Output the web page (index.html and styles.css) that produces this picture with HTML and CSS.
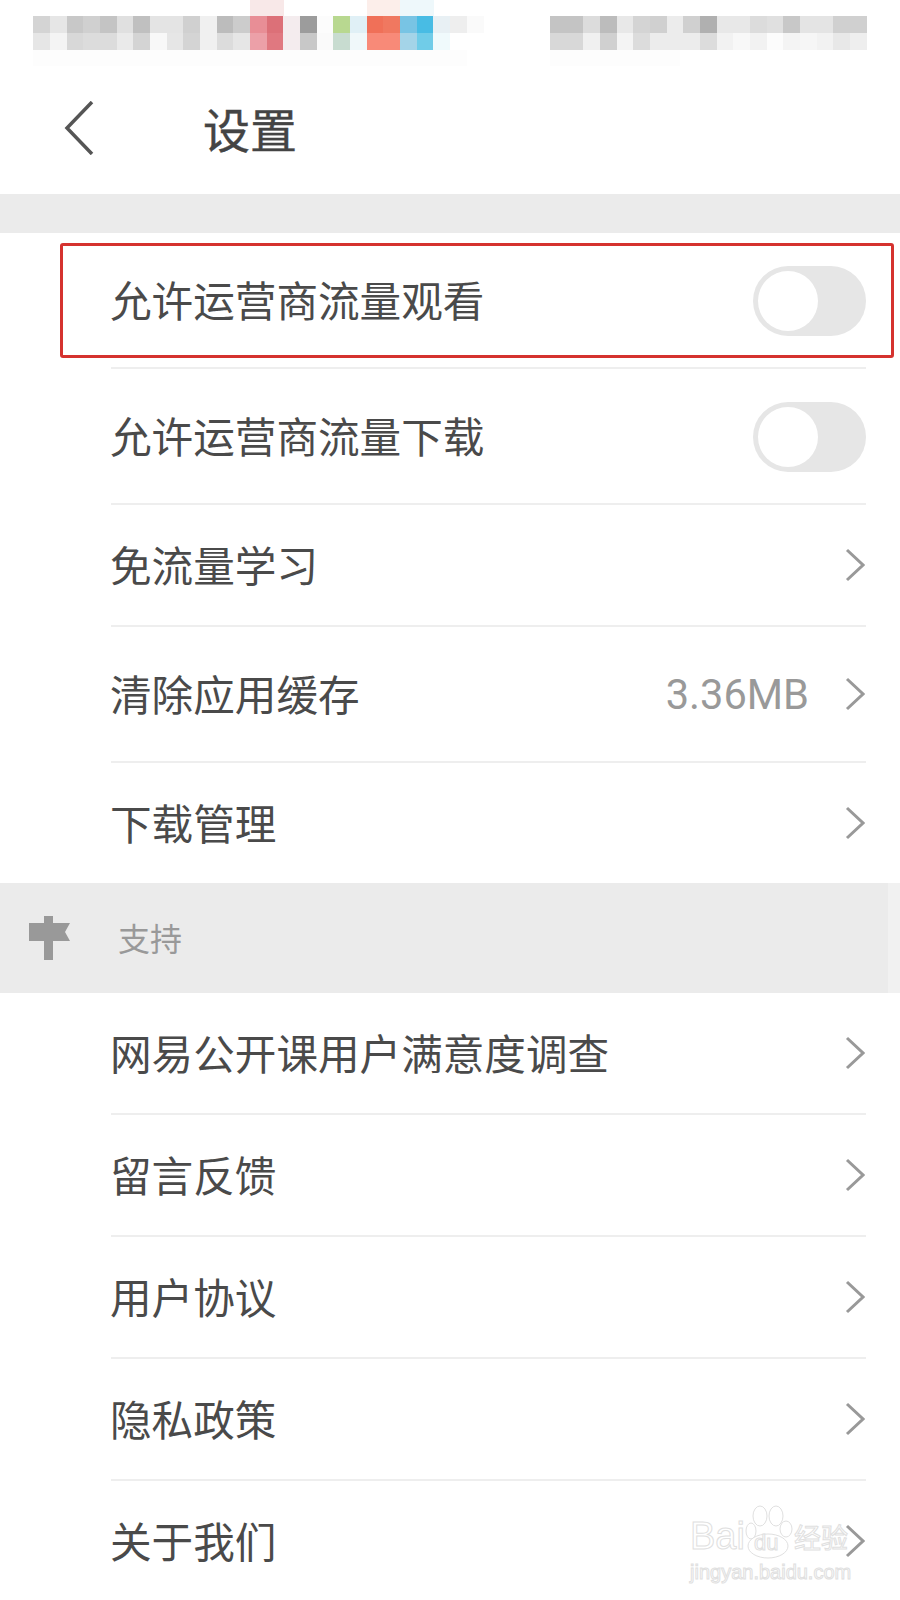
FILE: index.html
```html
<!DOCTYPE html>
<html lang="zh-CN">

<head>
  <meta charset="utf-8">
  <title>设置</title>
  <link rel="stylesheet" href="styles.css">
</head>

<body>
  <!-- status bar was pixelated in the original shot -->
  <svg class="status" width="900" height="66" viewBox="0 0 900 66">
    <g>
      <rect x="250" y="0" width="34" height="16" fill="#f8e8e8"/>
      <rect x="367" y="0" width="34" height="16" fill="#fceeea"/>
      <rect x="400" y="0" width="34" height="16" fill="#eef8fb"/>
      <rect x="33" y="50" width="434" height="16" fill="#fdfdfd"/>
      <rect x="550" y="50" width="130" height="16" fill="#fdfdfd"/>
    </g>
    <g>
      <rect x="33" y="16" width="17" height="17" fill="#d4d4d4"/>
      <rect x="50" y="16" width="17" height="17" fill="#e6e6e6"/>
      <rect x="67" y="16" width="17" height="17" fill="#c8c8c8"/>
      <rect x="83" y="16" width="17" height="17" fill="#d0d0d0"/>
      <rect x="100" y="16" width="17" height="17" fill="#c4c4c4"/>
      <rect x="117" y="16" width="17" height="17" fill="#e0e0e0"/>
      <rect x="133" y="16" width="17" height="17" fill="#c0c0c0"/>
      <rect x="150" y="16" width="17" height="17" fill="#e4e4e4"/>
      <rect x="167" y="16" width="17" height="17" fill="#e4e4e4"/>
      <rect x="183" y="16" width="17" height="17" fill="#d0d0d0"/>
      <rect x="200" y="16" width="17" height="17" fill="#f0f0f0"/>
      <rect x="217" y="16" width="17" height="17" fill="#bcbcbc"/>
      <rect x="233" y="16" width="17" height="17" fill="#cccccc"/>
      <rect x="250" y="16" width="17" height="17" fill="#e88e96"/>
      <rect x="267" y="16" width="17" height="17" fill="#dc7078"/>
      <rect x="283" y="16" width="17" height="17" fill="#f4ecee"/>
      <rect x="300" y="16" width="17" height="17" fill="#9c9c9c"/>
      <rect x="317" y="16" width="17" height="17" fill="#fcfcfc"/>
      <rect x="333" y="16" width="17" height="17" fill="#b8d890"/>
      <rect x="350" y="16" width="17" height="17" fill="#e0f0f6"/>
      <rect x="367" y="16" width="17" height="17" fill="#f07058"/>
      <rect x="383" y="16" width="17" height="17" fill="#f07860"/>
      <rect x="400" y="16" width="17" height="17" fill="#78c4e4"/>
      <rect x="417" y="16" width="17" height="17" fill="#48bce4"/>
      <rect x="433" y="16" width="17" height="17" fill="#e8f0f4"/>
      <rect x="450" y="16" width="17" height="17" fill="#eeeeee"/>
      <rect x="467" y="16" width="17" height="17" fill="#fafafa"/>
    </g>
    <g>
      <rect x="33" y="33" width="17" height="17" fill="#e6e6e6"/>
      <rect x="50" y="33" width="17" height="17" fill="#f4f4f4"/>
      <rect x="67" y="33" width="17" height="17" fill="#d8d8d8"/>
      <rect x="83" y="33" width="17" height="17" fill="#dcdcdc"/>
      <rect x="100" y="33" width="17" height="17" fill="#dcdcdc"/>
      <rect x="117" y="33" width="17" height="17" fill="#eaeaea"/>
      <rect x="133" y="33" width="17" height="17" fill="#d4d4d4"/>
      <rect x="150" y="33" width="17" height="17" fill="#f8f8f8"/>
      <rect x="167" y="33" width="17" height="17" fill="#e6e6e6"/>
      <rect x="183" y="33" width="17" height="17" fill="#d4d4d4"/>
      <rect x="200" y="33" width="17" height="17" fill="#f0f0f0"/>
      <rect x="217" y="33" width="17" height="17" fill="#dcdcdc"/>
      <rect x="233" y="33" width="17" height="17" fill="#e6e6e6"/>
      <rect x="250" y="33" width="17" height="17" fill="#eca0a8"/>
      <rect x="267" y="33" width="17" height="17" fill="#e07880"/>
      <rect x="283" y="33" width="17" height="17" fill="#f4ecee"/>
      <rect x="300" y="33" width="17" height="17" fill="#c8c8c8"/>
      <rect x="317" y="33" width="17" height="17" fill="#fafafa"/>
      <rect x="333" y="33" width="17" height="17" fill="#c8dcd0"/>
      <rect x="350" y="33" width="17" height="17" fill="#f0f8fa"/>
      <rect x="367" y="33" width="34" height="17" fill="#f88a78"/>
      <rect x="400" y="33" width="17" height="17" fill="#a4d4e8"/>
      <rect x="417" y="33" width="17" height="17" fill="#70cce8"/>
      <rect x="433" y="33" width="17" height="17" fill="#f0fafc"/>
    </g>
    <g>
      <rect x="550" y="16" width="17" height="17" fill="#c4c4c4"/>
      <rect x="567" y="16" width="17" height="17" fill="#c4c4c4"/>
      <rect x="583" y="16" width="17" height="17" fill="#dcdcdc"/>
      <rect x="600" y="16" width="17" height="17" fill="#bcbcbc"/>
      <rect x="617" y="16" width="17" height="17" fill="#e8e8e8"/>
      <rect x="633" y="16" width="17" height="17" fill="#d4d4d4"/>
      <rect x="650" y="16" width="17" height="17" fill="#d0d0d0"/>
      <rect x="667" y="16" width="17" height="17" fill="#ececec"/>
      <rect x="683" y="16" width="17" height="17" fill="#d0d0d0"/>
      <rect x="700" y="16" width="17" height="17" fill="#b0b0b0"/>
      <rect x="717" y="16" width="33" height="17" fill="#e8e8e8"/>
      <rect x="750" y="16" width="17" height="17" fill="#dcdcdc"/>
      <rect x="767" y="16" width="17" height="17" fill="#e0e0e0"/>
      <rect x="783" y="16" width="17" height="17" fill="#c8c8c8"/>
      <rect x="800" y="16" width="33" height="17" fill="#e4e4e4"/>
      <rect x="833" y="16" width="34" height="17" fill="#d0d0d0"/>
      <rect x="550" y="33" width="34" height="17" fill="#d8d8d8"/>
      <rect x="583" y="33" width="17" height="17" fill="#f0f0f0"/>
      <rect x="600" y="33" width="17" height="17" fill="#d0d0d0"/>
      <rect x="617" y="33" width="17" height="17" fill="#f4f4f4"/>
      <rect x="633" y="33" width="17" height="17" fill="#dcdcdc"/>
      <rect x="650" y="33" width="50" height="17" fill="#ececec"/>
      <rect x="700" y="33" width="17" height="17" fill="#dcdcdc"/>
      <rect x="717" y="33" width="17" height="17" fill="#f2f2f2"/>
      <rect x="733" y="33" width="17" height="17" fill="#f8f8f8"/>
      <rect x="750" y="33" width="17" height="17" fill="#f2f2f2"/>
      <rect x="767" y="33" width="17" height="17" fill="#fcfcfc"/>
      <rect x="783" y="33" width="17" height="17" fill="#f4f4f4"/>
      <rect x="800" y="33" width="17" height="17" fill="#f6f6f6"/>
      <rect x="817" y="33" width="16" height="17" fill="#f2f2f2"/>
      <rect x="833" y="33" width="17" height="17" fill="#e8e8e8"/>
      <rect x="850" y="33" width="17" height="17" fill="#eeeeee"/>
    </g>
  </svg>

  <header class="nav">
    <svg class="back" width="30" height="54" viewBox="0 0 30 54">
      <polyline points="28,1 3,27 28,53"/>
    </svg>
    <h1>设置</h1>
  </header>

  <div class="band"></div>

  <div class="row row-tall">
    <span class="label">允许运营商流量观看</span>
    <div class="toggle"><div class="knob"></div></div>
  </div>
  <div class="highlight"></div>
  <div class="row row-tall">
    <span class="label">允许运营商流量下载</span>
    <div class="toggle"><div class="knob"></div></div>
  </div>
  <div class="row">
    <span class="label">免流量学习</span>
    <svg class="chevron" width="20" height="34" viewBox="0 0 20 34"><polyline points="2,2 18,17 2,32"/></svg>
  </div>
  <div class="row row-tall">
    <span class="label">清除应用缓存</span>
    <div class="right">
      <span class="value">3.36MB</span>
      <svg class="chevron" width="20" height="34" viewBox="0 0 20 34"><polyline points="2,2 18,17 2,32"/></svg>
    </div>
  </div>
  <div class="row row-last">
    <span class="label">下载管理</span>
    <svg class="chevron" width="20" height="34" viewBox="0 0 20 34"><polyline points="2,2 18,17 2,32"/></svg>
  </div>

  <div class="section">
    <svg class="post" width="41" height="44" viewBox="0 0 41 44">
      <path d="M15 0h9v7h17l-5 9 5 9H24v19h-9V25H0V7h15z"/>
    </svg>
    <span class="section-name">支持</span>
  </div>

  <div class="row">
    <span class="label">网易公开课用户满意度调查</span>
    <svg class="chevron" width="20" height="34" viewBox="0 0 20 34"><polyline points="2,2 18,17 2,32"/></svg>
  </div>
  <div class="row">
    <span class="label">留言反馈</span>
    <svg class="chevron" width="20" height="34" viewBox="0 0 20 34"><polyline points="2,2 18,17 2,32"/></svg>
  </div>
  <div class="row">
    <span class="label">用户协议</span>
    <svg class="chevron" width="20" height="34" viewBox="0 0 20 34"><polyline points="2,2 18,17 2,32"/></svg>
  </div>
  <div class="row">
    <span class="label">隐私政策</span>
    <svg class="chevron" width="20" height="34" viewBox="0 0 20 34"><polyline points="2,2 18,17 2,32"/></svg>
  </div>
  <div class="row row-last">
    <span class="label">关于我们</span>
    <svg class="chevron" width="20" height="34" viewBox="0 0 20 34"><polyline points="2,2 18,17 2,32"/></svg>
  </div>

  <div class="watermark">
    <div class="wm-logo">
      <span class="wm-bai">Bai</span>
      <svg class="wm-paw" width="48" height="54" viewBox="0 0 48 54">
        <ellipse cx="15" cy="11" rx="7" ry="10"/>
        <ellipse cx="31" cy="11" rx="7" ry="10"/>
        <ellipse cx="6" cy="26" rx="5" ry="8"/>
        <ellipse cx="41" cy="24" rx="6" ry="8"/>
        <ellipse cx="23" cy="41" rx="20" ry="12"/>
      </svg>
      <span class="wm-du">du</span>
      <span class="wm-cn">经验</span>
    </div>
    <div class="wm-url">jingyan.baidu.com</div>
  </div>
</body>

</html>
```

FILE: styles.css
```css
html,
body {
  margin: 0;
  padding: 0;
}

body {
  position: relative;
  width: 900px;
  height: 1600px;
  overflow: hidden;
  background: #fff;
  color: #4a4a4a;
  font-family: 'Noto Sans CJK SC', sans-serif;
  font-size: 41.6px;
}

.status {
  display: block;
  filter: blur(0.6px);
}

.nav {
  display: flex;
  align-items: center;
  height: 128px;
  padding-left: 64px;
}

.back {
  margin-bottom: 4px;
}

.back polyline {
  fill: none;
  stroke: #555;
  stroke-width: 3.5;
}

.nav h1 {
  margin: 0 0 5px 109px;
  font-size: 47px;
  font-weight: 400;
  color: #444;
  -webkit-text-stroke: 0.4px #444;
}

.band {
  height: 39px;
  background: #ebebeb;
}

.row {
  display: flex;
  align-items: center;
  justify-content: space-between;
  box-sizing: border-box;
  height: 122px;
  margin: 0 34px 0 111px;
  border-bottom: 2px solid #eeeeee;
}

.row-tall {
  height: 136px;
}

.row-last {
  height: 120px;
  border-bottom: none;
}

.label {
  margin: 0 0 2px -1px;
}

.toggle {
  box-sizing: border-box;
  width: 113px;
  height: 70px;
  margin-top: 2px;
  padding: 5px;
  border-radius: 35px;
  background: #e6e6e6;
}

.knob {
  width: 60px;
  height: 60px;
  border-radius: 50%;
  background: #fff;
}

/* red marker drawn on top of the first row */
.highlight {
  position: absolute;
  left: 60px;
  top: 243px;
  box-sizing: border-box;
  width: 834px;
  height: 115px;
  border: 3px solid #d5322f;
  border-radius: 3px;
}

.right {
  display: flex;
  align-items: center;
}

.value {
  margin-right: 36px;
  font-family: Roboto, sans-serif;
  color: #999;
}

.chevron {
  display: block;
  margin-right: 1px;
}

.chevron polyline {
  fill: none;
  stroke: #999;
  stroke-width: 3;
}

.section {
  display: flex;
  align-items: center;
  height: 110px;
  padding-left: 29px;
  background: linear-gradient(to right, #ebebeb 888px, #f1f1f1 888px);
  color: #999;
  font-size: 32px;
}

.post {
  margin-right: 48px;
}

.post path {
  fill: #999;
}

.section-name {
  margin-bottom: 3px;
}

.watermark {
  position: absolute;
  left: 690px;
  top: 1503px;
  width: 170px;
  color: #fff;
  -webkit-text-stroke: 1px #e0e0e0;
  font-family: 'Liberation Sans', sans-serif;
}

.wm-logo {
  position: relative;
  display: flex;
  align-items: flex-end;
  height: 56px;
}

.wm-bai {
  font-size: 38px;
  line-height: 46px;
}

.wm-paw {
  margin-left: 0;
}

.wm-paw ellipse {
  fill: #fff;
  stroke: #e0e0e0;
}

.wm-du {
  position: absolute;
  left: 64px;
  top: 27px;
  font-size: 22px;
}

.wm-cn {
  margin-left: 1px;
  font-family: 'Noto Sans CJK SC', sans-serif;
  font-size: 27px;
  line-height: 44px;
}

.wm-url {
  margin-top: 2px;
  font-size: 20px;
  white-space: nowrap;
}
```
